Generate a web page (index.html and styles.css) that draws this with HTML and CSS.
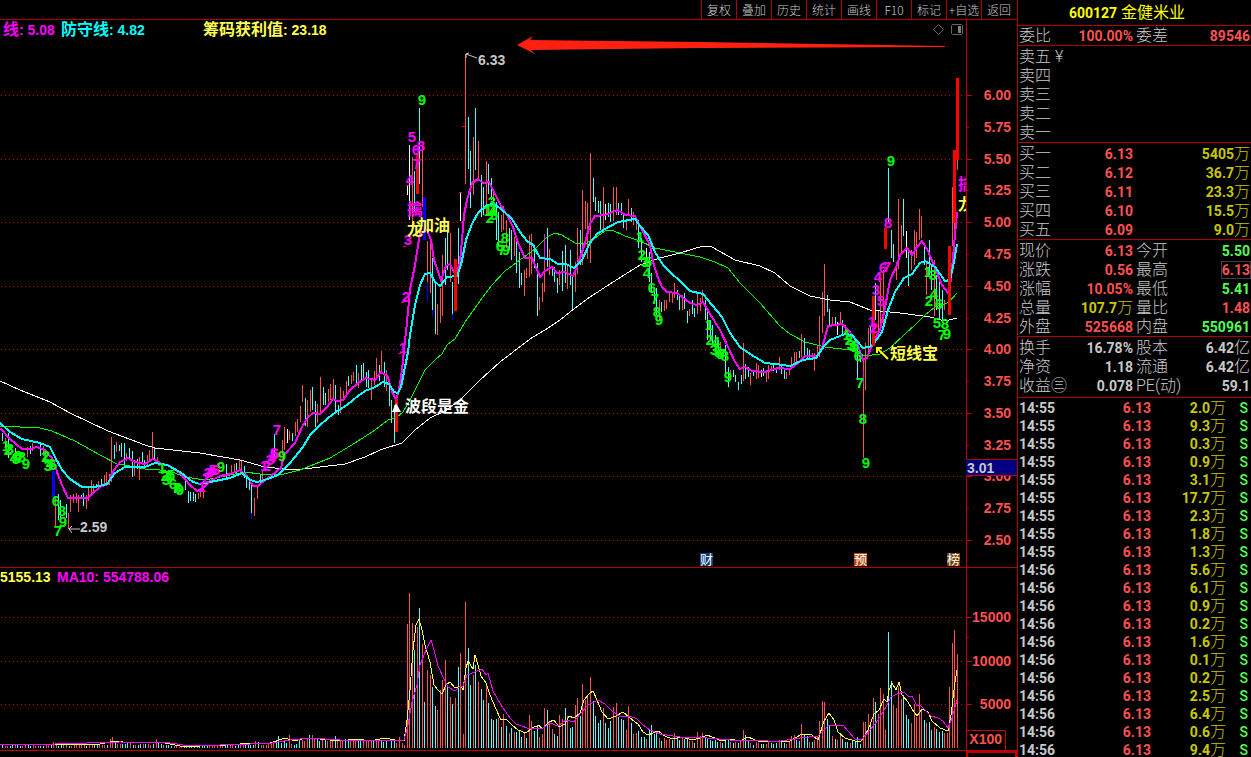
FILE: index.html
```html
<!DOCTYPE html>
<html lang="zh-CN">
<head>
<meta charset="utf-8">
<title>600127 金健米业</title>
<link rel="stylesheet" href="styles.css">
</head>
<body>
<main class="terminal">
  <section class="charts">
    <nav class="toolbar">
      <button>复权</button><button>叠加</button><button>历史</button><button>统计</button><button>画线</button><button>F10</button><button>标记</button><button>+自选</button><button>返回</button>
    </nav>
    <svg class="pane price" viewBox="0 20 1017 547" preserveAspectRatio="xMaxYMin meet">
      <defs><clipPath id="plot"><rect x="0" y="20" width="966" height="547"/></clipPath></defs>
      <g class="grid" id="price-grid"></g>
      <g clip-path="url(#plot)">
        <g id="candles"></g>
        <polyline class="ma white" points="0,381 20,390 50,402 70,413 108,431 145,445 155,448 200,453 240,460 265,467 295,470 320,467 345,464 365,457 380,450 402,443 415,430 430,418 445,411 460,400 480,380 500,362 530,339 545,330 560,320 570,312 590,297 610,284 640,265 660,258 680,253 703,246 712,247 735,260 760,266 775,273 790,286 810,296 830,300 850,302 870,310 900,313 930,317 945,321 957,318"/>
        <polyline class="ma green" points="0,426 20,427 40,428 52,431 75,441 100,455 117,464 130,466 145,469 160,470 172,472 185,477 205,480 220,477 245,472 260,474 280,475 300,470 330,458 355,443 375,430 388,420 397,417 403,412 410,400 415,390 425,370 435,360 442,354 447,345 455,339 465,322 480,301 492,285 505,271 520,260 535,249 547,237 555,233 562,235 575,243 585,244 595,238 605,231 612,230 625,236 640,241 655,248 675,252 700,257 715,262 728,268 740,283 760,303 780,326 790,334 805,342 825,347 850,350 865,356 880,354 890,348 905,334 915,325 925,315 935,307 945,304 950,301 957,293"/>
        <polyline class="ma thick magenta" points="0,428 10,439 22,449 30,449 37,447 45,450 52,458 55,465 58,475 62,485 68,498 88,498 92,494 100,487 108,484 112,473 120,462 128,458 135,462 145,464 153,459 162,464 168,465 180,473 190,485 197,491 203,488 210,481 220,476 230,474 240,470 247,476 253,486 258,486 265,480 272,475 281,468 284,455 295,443 302,427 308,417 313,413 320,414 327,407 333,399 337,401 343,400 350,390 358,383 366,378 375,380 381,372 388,377 391,389 396,400 399,390 402,370 404,350 406,332 410,290 415,265 420,233 427,230 431,240 434,260 441,280 446,266 450,264 453,270 456,276 460,262 462,240 464,215 467,200 472,183 478,179 483,183 489,182 493,190 500,204 508,217 513,227 518,243 525,258 532,258 535,265 540,277 545,271 552,267 557,273 565,272 573,276 578,264 585,243 590,224 595,216 605,215 610,213 618,210 625,215 635,216 640,226 650,245 653,262 658,278 662,287 667,292 677,293 682,297 690,303 697,305 703,302 710,314 720,330 728,347 735,362 740,369 745,367 752,371 765,372 778,368 790,369 798,363 805,356 817,356 822,348 828,326 842,324 850,332 857,343 863,360 867,358 873,343 880,330 885,308 890,280 897,265 900,255 907,248 912,255 917,247 922,241 928,251 935,268 942,285 948,293 951,280 955,235 957,212"/>
        <polyline class="ma thick cyan" points="0,423 10,432 22,439 40,443 50,447 55,457 62,470 70,479 82,487 95,487 107,484 115,473 125,467 145,467 155,463 167,465 180,472 193,482 200,484 215,481 230,478 242,473 250,480 257,482 265,480 278,475 290,463 303,447 310,435 318,427 328,418 336,412 347,405 358,396 365,391 375,387 383,382 389,384 394,392 398,393 401,387 404,372 408,352 410,335 415,305 420,285 425,274 430,273 435,282 440,286 447,277 457,276 461,265 466,240 472,224 478,213 487,205 493,204 500,208 512,219 520,232 527,241 533,245 540,258 550,259 558,264 566,264 574,268 582,260 590,243 597,234 605,229 618,222 635,219 640,226 648,235 655,252 663,265 670,272 680,281 690,291 703,294 712,305 722,317 730,333 740,347 750,354 765,363 775,364 790,366 803,360 816,358 824,346 830,340 845,334 852,335 863,348 872,346 882,332 888,310 895,292 904,278 912,274 920,263 925,261 935,267 945,281 950,280 954,262 957,244"/>
        <g id="blocks"></g>
        <path class="fill-white" d="M396 403l5 9h-9z"/>
        <g class="count" id="counts"></g>
        <g class="note">
          <text class="t-magenta" x="407" y="215">擒</text>
          <text class="t-yellow" x="407" y="235">龙</text>
          <text class="t-yellow" x="418" y="231">加油</text>
          <text class="t-white" x="405" y="412">波段是金</text>
          <text class="t-yellow" x="890" y="359">短线宝</text>
          <text class="t-magenta" x="958" y="190">擒</text>
          <text class="t-yellow" x="958" y="210">龙</text>
        </g>
        <path class="pointer yellow" d="M888 359l-11-11m0 5v-5h5"/>
        <path class="pointer gray" d="M80 529h-11m3-3l-3 3 3 4M477 58l-11-4m0 4v-4l3-1"/>
        <text class="price-tag" x="80" y="532">2.59</text>
        <text class="price-tag" x="478" y="65">6.33</text>
        <path class="arrow" d="M517 45L533 36L530 40L700 42L945 46V47L700 48L531 50L535 54Z"/>
      </g>
      <g class="legend">
        <text class="t-magenta" x="3" y="35"><tspan class="cjk">线</tspan>: 5.08</text>
        <text class="t-cyan" x="61" y="35"><tspan class="cjk">防守线</tspan>: 4.82</text>
        <text class="t-yellow" x="203" y="35"><tspan class="cjk">筹码获利值</tspan>: 23.18</text>
      </g>
      <path class="tool-icon" d="M938.500 24.500l5 5-5 5-5-5zM952.500 24.500h9l1 1v8l-1 1h-9l-1-1v-8z"/>
      <path class="tool-fill" d="M958 26h3v7h-3z"/>
      <g class="event">
        <rect x="700" y="553" width="13" height="13" fill="#0c3c74"/><text x="700" y="564">财</text>
        <rect x="854" y="553" width="13" height="13" fill="#b84810"/><text x="854" y="564">预</text>
        <rect x="947" y="553" width="13" height="13" fill="#704008"/><text x="947" y="564">榜</text>
      </g>
      <path class="frame" id="price-axis" d="M966.500 20V567"/>
      <g class="scale" id="price-scale"></g>
      <rect class="cursor" x="966" y="459" width="52" height="17"/>
      <path class="frame" d="M967 459.500H1017M967 475.500H1017"/>
      <text class="price-tag" x="967" y="473">3.01</text>
    </svg>
    <svg class="pane volume" viewBox="0 568 1017 189" preserveAspectRatio="xMaxYMin meet">
      <g class="grid" id="volume-grid"></g>
      <g id="bars"></g>
      <polyline class="ma yellow" points="0,744 100,744 115,741 130,743 152,742 165,743 180,746 200,746 225,745 240,744 255,743 270,743 285,738 295,741 305,738 320,739 340,741 357,739 370,741 385,738 395,740 404,741 407,720 410,690 413,650 416,625 419,619 422,630 425,645 430,662 434,685 438,690 442,694 446,685 450,682 455,688 461,686 463,690 466,668 468,661 473,669 475,655 478,665 481,676 486,683 490,695 496,709 501,720 506,719 512,725 518,730 526,733 532,728 539,725 542,729 549,722 554,720 559,727 565,724 569,716 574,718 580,713 584,700 590,693 593,691 597,700 602,712 608,719 616,716 623,712 630,718 638,724 643,732 648,735 658,731 665,736 672,739 682,737 692,740 700,738 707,735 722,741 730,739 740,741 748,737 760,742 790,741 802,734 812,735 818,740 824,721 829,713 834,720 838,732 845,738 855,741 861,741 868,730 874,714 879,710 884,699 887,702 889,690 892,683 896,690 899,682 902,695 908,702 912,709 917,716 922,709 928,712 932,721 940,728 948,731 951,715 955,682 957,670"/>
      <polyline class="ma magenta" points="0,744 25,744 40,745 55,744 120,742 170,743 190,746 250,744 272,743 290,740 310,738 340,740 360,740 404,740 408,725 412,702 417,685 420,665 426,650 431,640 434,650 438,666 444,679 448,687 455,691 460,686 463,686 467,675 475,672 482,669 486,675 488,673 493,691 501,705 510,718 516,724 530,729 543,728 550,723 558,726 566,720 574,722 580,714 588,705 598,700 605,704 612,711 619,716 630,716 637,719 643,725 650,730 660,734 680,737 707,738 730,740 740,741 760,740 775,742 800,738 818,736 828,726 843,725 848,731 855,739 862,739 870,730 878,720 886,707 891,697 897,694 904,692 909,697 912,696 917,706 920,705 931,716 938,718 943,721 948,728 952,718 957,700"/>
      <g class="legend">
        <text class="t-yellow" x="0" y="582">5155.13</text>
        <text class="t-magenta" x="57" y="582">MA10: 554788.06</text>
      </g>
      <path class="frame" id="volume-axis" d="M966.500 568V757M0 750.500H1017M967 730.500H1005.500V750M967 637.500h2M967 683.500h2"/>
      <path class="frame heavy" d="M967 757V752H1016V757"/>
      <g class="scale" id="volume-scale"><text x="1002" y="744">X100</text></g>
    </svg>
  </section>

  <aside class="quote">
    <h1 class="title"><b>600127</b> 金健米业</h1>
    <table class="block">
      <colgroup><col class="c-label"><col class="c-value"><col class="c-label"><col></colgroup>
      <tr><th>委比</th><td class="up">100.00%</td><th>委差</th><td class="up">89546</td></tr>
    </table>
    <table class="block">
      <tr><th>卖五 ¥</th></tr><tr><th>卖四</th></tr><tr><th>卖三</th></tr><tr><th>卖二</th></tr><tr><th>卖一</th></tr>
    </table>
    <table class="block">
      <colgroup><col class="c-label"><col class="c-value"><col></colgroup>
      <tr><th>买一</th><td class="up">6.13</td><td class="vol">5405<i>万</i></td></tr>
      <tr><th>买二</th><td class="up">6.12</td><td class="vol">36.7<i>万</i></td></tr>
      <tr><th>买三</th><td class="up">6.11</td><td class="vol">23.3<i>万</i></td></tr>
      <tr><th>买四</th><td class="up">6.10</td><td class="vol">15.5<i>万</i></td></tr>
      <tr><th>买五</th><td class="up">6.09</td><td class="vol">9.0<i>万</i></td></tr>
    </table>
    <table class="block">
      <colgroup><col class="c-label"><col class="c-value"><col class="c-label"><col></colgroup>
      <tr><th>现价</th><td class="up">6.13</td><th>今开</th><td class="down">5.50</td></tr>
      <tr><th>涨跌</th><td class="up">0.56</td><th>最高</th><td class="up"><span class="boxed">6.13</span></td></tr>
      <tr><th>涨幅</th><td class="up">10.05%</td><th>最低</th><td class="down">5.41</td></tr>
      <tr><th>总量</th><td class="vol">107.7<i>万</i></td><th>量比</th><td class="up">1.48</td></tr>
      <tr><th>外盘</th><td class="up">525668</td><th>内盘</th><td class="down">550961</td></tr>
    </table>
    <table class="block finance">
      <colgroup><col class="c-label"><col class="c-value"><col class="c-label"><col></colgroup>
      <tr><th>换手</th><td>16.78%</td><th>股本</th><td>6.42<i>亿</i></td></tr>
      <tr><th>净资</th><td>1.18</td><th>流通</th><td>6.42<i>亿</i></td></tr>
      <tr><th>收益㊂</th><td>0.078</td><th>PE(动)</th><td>59.1</td></tr>
    </table>
    <table class="block ticks">
      <colgroup><col class="c-label"><col class="c-price"><col class="c-amount"><col></colgroup>
      <tbody id="ticks"></tbody>
    </table>
  </aside>
</main>
<script src="chart.js"></script>
</body>
</html>
```
FILE: styles.css
```css
* { box-sizing: border-box; }
body {
  margin: 0;
  background: #000;
  color: #c8c8c8;
  font-family: Roboto, "Noto Sans CJK SC", sans-serif;
  overflow: hidden;
}
.terminal {
  display: grid;
  grid-template-columns: 1fr 234px;
  height: 100vh;
}
.charts { display: flex; flex-direction: column; min-width: 0; }
.toolbar {
  display: flex;
  justify-content: flex-end;
  height: 20px;
  flex: none;
  padding-right: 1px;
  border-bottom: 1px solid #b00000;
}
.toolbar button {
  width: 35px;
  padding: 0;
  border: 0;
  border-left: 1px solid #b00000;
  background: none;
  color: #c8c8c8;
  font: 300 12px/17px "Noto Sans CJK SC", sans-serif;
  white-space: nowrap;
}
.pane { display: block; width: 100%; min-height: 0; }
.price { flex: 547; }
.volume { flex: 189; border-top: 1px solid #b00000; }
.pane text { font: 700 14px "Liberation Sans", "Noto Sans CJK SC", sans-serif; }

.grid path { stroke: #b00000; stroke-dasharray: 1 3; shape-rendering: crispEdges; }
.bar { fill: none; shape-rendering: crispEdges; }
.ma { fill: none; stroke-width: 1; shape-rendering: crispEdges; }
.thick { stroke-width: 2; }
.white { stroke: #fff; }
.green { stroke: #0f0; }
.magenta { stroke: #f0f; }
.cyan { stroke: #0ff; }
.yellow { stroke: #ffff50; }
.red { stroke: #ff5050; }
.aqua { stroke: #50ffff; }
.blue { stroke: #00f; }
.gray { stroke: #c8c8c8; }
.pointer { fill: none; }
.pointer.yellow { stroke-width: 2; stroke: #ff0; }
.fill-white { fill: #fff; }
.t-magenta { fill: #f0f; }
.t-cyan { fill: #0ff; }
.t-yellow { fill: #ffff50; }
.t-white { fill: #fff; }
.t-green { fill: #0f0; }
.pane .count text { font-size: 15px; text-anchor: middle; }
.pane .note text, .pane .legend .cjk { font-family: "Noto Sans CJK SC", sans-serif; font-size: 16px; }
.price-tag { fill: #c8c8c8; }
.arrow { fill: #ff2010; }
.tool-icon { fill: none; stroke: #666; }
.tool-fill { fill: #808080; }
.pane .event text { font: 400 13px "Noto Sans CJK SC", sans-serif; fill: #fff; }
.frame { fill: none; stroke: #c00000; shape-rendering: crispEdges; }
.heavy { stroke-width: 2; }
.scale { fill: #ff5050; text-anchor: end; }
.cursor { fill: #000080; }

.quote { border-left: 1px solid #b00000; overflow: hidden; }
.title {
  margin: 0;
  height: 25px;
  font-size: 16px;
  font-weight: 400;
  line-height: 25px;
  text-align: center;
  padding-right: 15px;
  color: #ff0;
}
.title b { font-size: 14px; }
.block {
  width: 100%;
  table-layout: fixed;
  border-collapse: separate;
  border-spacing: 0;
  border-top: 1px solid #b00000;
  padding: 1px 0 0 1px;
}
.title + .block { padding-top: 0; }
.block.finance { padding-bottom: 2px; }
.block td, .block th { height: 19px; padding: 0; line-height: 18px; white-space: nowrap; }
.block th { font-size: 16px; font-weight: 300; text-align: left; }
.block td + th { padding-left: 3px; }
.block td { font-size: 14px; font-weight: 700; text-align: right; }
.block i { font-size: 16px; line-height: 14px; font-style: normal; font-weight: 300; }
.block td:last-child { padding-right: 1px; }
.c-label { width: 48px; }
.c-value { width: 66px; }
.c-price { width: 84px; }
.c-amount { width: 75px; }
.block .up { color: #ff5050; }
.block .down { color: #50ff50; }
.block .vol { color: #c8c800; }
.boxed { display: inline-block; line-height: 16px; outline: 1px solid #404040; }
.block.ticks td { height: 18px; line-height: 18px; }
.ticks td:first-child { text-align: left; }
.ticks td:last-child { padding-right: 3px; font-weight: 500; }
```
FILE: chart.js
```js
const SVG = "http://www.w3.org/2000/svg";
const byId = (id) => document.getElementById(id);

function add(parent, tag, attrs, text) {
  const el = document.createElementNS(SVG, tag);
  for (const key in attrs) el.setAttribute(key, attrs[key]);
  if (text) el.textContent = text;
  byId(parent).appendChild(el);
}

const STROKE = { r: "red", c: "aqua", w: "white", b: "blue", m: "magenta" };

// Colour, x, high, low
const candles = `
c2,433,441 r5,438,448 c8,433,458 c15,448,460 r27,447,457 c30,446,454 r32,443,451 c40,443,456 r43,446,456
r55,497,526 c58,494,520 c60,500,520 c66,504,518 r68,513,529 r70,495,512 r73,494,503 r76,493,503 r78,495,512 c81,495,499
c83,493,506 r86,495,509 r88,488,501 r91,480,494 r93,484,492 c96,484,488 r98,481,488 c101,479,487 r104,475,486
r106,472,486 r109,474,485 r111,437,482 c114,445,459 r116,442,452 c119,445,451 c121,443,457 c124,443,465 r126,453,461
c129,448,458 c132,451,477 r134,460,476 c137,459,469 r139,457,480 c142,452,463 c144,460,467 r147,455,465 r149,450,462
r152,432,458 c154,448,461 r157,457,463 c185,481,490 c188,491,503 c190,492,501 c193,492,501 c195,494,502 r198,493,499
r200,488,497 r203,486,498 c226,464,478 r231,465,474 r234,464,473 c236,463,474 r239,460,470 r241,460,472 c244,466,478
c246,474,488 c249,480,490 c251,483,513 b251,513,519 r254,498,516 r257,485,499 c260,474,484 r262,470,480
c274,434,457 r282,440,455 r284,427,450 w287,429,443 r289,431,440 c292,433,441 r295,422,436 r297,419,432 r300,406,422
r302,385,402 c305,398,426 r307,400,427 r310,390,412 c312,387,410 c315,401,427 r317,404,423 r320,377,415 c323,387,405
c325,393,405 r328,389,402 r330,384,400 r333,379,398 c335,385,411 c338,405,415 r340,387,413 r343,391,400 r346,381,393
c348,376,386 r351,375,384 r353,372,381 c356,365,383 r358,373,388 c361,365,382 c363,363,378 c366,372,387 c368,370,388
r371,378,400 r374,371,385 r376,358,376 c379,365,381 r381,351,371 c384,362,387 r386,370,391 c389,379,406 c391,400,423
c394,405,443 w407,185,195 w409,145,220 r412,157,228 c414,171,212 c419,108,184 r422,145,207 r427,241,282 b427,282,301
r430,240,293 c432,258,310 b432,310,316 c435,284,334 r437,304,335 r440,288,323 r442,255,316 c445,238,285 c447,231,270
r450,233,282 c452,282,314 b452,314,320 c458,228,284 w460,192,221 r465,54,184 c468,117,169 c470,151,208 r473,137,195
c475,108,170 r478,141,180 c481,175,217 c483,187,215 r486,161,215 c488,164,194 c491,178,200 r493,190,215 c496,202,240
c498,212,245 r501,215,232 r503,206,230 r506,220,248 c509,228,250 c511,230,260 r514,237,256 c516,240,273 c519,252,288
c521,273,285 r524,270,296 r526,268,278 r529,235,277 r531,234,274 c534,245,268 c537,263,316 r539,297,310 r542,283,302
m544,234,262 r544,262,292 c547,228,267 r549,249,275 c552,267,276 c554,267,282 c557,278,293 r559,270,285 c562,251,291
c565,245,283 r567,266,289 c570,250,285 c572,275,310 r575,262,292 r577,228,274 c580,230,265 r582,190,265 r585,201,229
r587,203,259 r590,153,263 c593,178,202 c595,197,211 c598,201,213 c600,201,230 r603,187,230 w605,204,220 c608,203,217
c610,204,222 r613,187,221 r616,187,215 c618,203,215 c621,203,215 c623,213,228 r626,220,230 r628,199,215 c631,208,222
r633,212,225 r636,219,230 c638,220,248 c641,238,262 w646,248,260 c649,252,282 c651,273,292 c654,290,303 c656,288,315
r659,300,320 c661,302,312 r664,300,311 r666,300,309 r669,293,302 r672,292,303 r674,283,298 c677,290,300 c679,295,310
r682,295,310 c684,293,309 c687,311,323 r689,309,316 c692,300,314 c694,308,317 r697,292,314 r700,298,311 r702,290,301
c705,300,320 c707,310,340 c710,320,340 c712,325,345 c715,335,350 c718,340,355 r720,342,350 c725,345,373 c728,367,387
r730,370,380 c733,370,377 c735,375,382 c738,382,390 c741,375,384 r743,343,381 c745,364,379 c748,367,377 r750,373,385
c753,370,376 r756,363,379 r758,365,378 w761,370,377 c763,368,376 r766,372,382 r768,365,379 r771,366,371 c773,365,371
c776,368,373 r779,357,370 c781,366,374 c784,369,379 r786,372,379 r789,368,375 r791,357,369 r794,352,367 r796,352,362
c799,351,358 r801,334,357 c804,338,355 c807,348,358 c809,350,358 r812,353,358 r814,353,371 r817,346,357 r819,316,357
r822,292,333 r824,264,316 c827,295,312 c829,309,325 r832,317,325 c835,317,326 w837,322,335 r840,312,323 c842,320,334
r845,325,335 c857,350,380 c860,350,362 r863,360,458 m863,370,384 r865,343,390 r868,328,354 c870,327,346 c875,283,320
r878,310,335 r880,280,330 r883,270,330 c888,168,222 c891,230,258 c893,244,262 r896,262,280 r898,199,269 r901,225,252
c903,199,236 w906,231,258 c908,250,286 r911,250,270 r914,230,265 r916,232,258 r919,209,240 r921,216,238 c924,245,265
r926,262,295 c929,240,275 c931,265,290 r934,260,316 c936,275,310 c939,280,320 c942,290,320 r944,300,310 r952,187,246
r954,222,258 r957,160,170`;

for (const item of candles.trim().split(/\s+/)) {
  const [x, high, low] = item.slice(1).split(",").map(Number);
  add("candles", "path", { class: "bar " + STROKE[item[0]], d: `M${x + 0.5} ${high}V${low}` });
}

// Signal candles: x, y, width, height, colour
for (const [x, y, w, h, fill] of [
  [52, 471, 3, 26, "#00f"], [395, 399, 3, 33, "#f00"], [416, 153, 3, 41, "#f00"],
  [423, 197, 3, 43, "#00f"], [454, 259, 3, 52, "#f00"], [872, 296, 3, 50, "#f00"],
  [884, 228, 3, 21, "#f00"], [948, 246, 3, 69, "#f00"], [953, 150, 3, 73, "#f00"],
  [956, 78, 3, 82, "#f00"], [398, 353, 3, 1, "#f00"], [401, 302, 3, 1, "#f00"],
  [403, 246, 3, 1, "#f00"], [406, 185, 3, 1, "#f00"], [459, 192, 3, 1, "#f00"],
  [462, 126, 3, 1, "#f00"], [860, 414, 3, 1, "#00f"],
]) add("blocks", "rect", { x, y, width: w, height: h, fill });

// Sequence counts: digit, centre x, centre y
const counts = {
  "t-green": `1,6,446 2,8,450 3,10,449 4,14,458 5,16,459 6,18,456 7,20,458 8,22,457 9,26,464 1,45,457 2,46,456 3,48,466
    4,50,464 5,53,465 6,56,501 8,62,511 9,63,522 7,58,531 1,162,468 2,165,476 3,166,480 4,169,477 5,171,475 6,173,484
    7,176,488 8,178,488 9,180,490 9,221,467 9,282,456 9,422,100 1,488,211 2,490,218 3,492,202 4,493,211 5,494,215
    6,500,246 8,505,238 7,502,250 9,506,250 1,640,237 2,642,255 3,645,262 4,647,273 5,648,262 6,652,288 7,655,299
    8,657,312 9,659,320 1,709,325 2,710,340 3,714,350 4,716,342 5,718,352 6,720,354 7,722,354 8,725,356 9,728,377
    1,847,335 2,849,340 3,851,345 4,853,347 5,855,346 6,858,356 7,860,383 8,863,419 9,866,463 9,891,161 1,928,272
    2,929,301 3,933,275 4,934,294 5,937,323 6,939,304 7,942,335 8,945,324 9,947,334`,
  "t-magenta": `1,202,487 2,206,478 3,208,473 4,210,472 5,213,470 6,216,470 1,264,466 2,267,466 3,270,460 4,272,458
    5,275,454 6,274,453 7,277,430 1,403,348 2,406,297 3,408,240 4,410,180 5,412,137 6,416,150 8,421,146 7,417,164
    1,872,322 2,874,328 3,876,290 4,878,277 5,881,301 6,883,268 7,887,267 8,888,223`,
};
for (const cls in counts) {
  for (const item of counts[cls].trim().split(/\s+/)) {
    const [digit, x, y] = item.split(",");
    add("counts", "text", { class: cls, x, y: Number(y) + 5 }, digit);
  }
}

// Volume: colour, x, top
const BASE = 748;
let volume = `
c391,741 c394,741 r396,743 r399,737 r402,743 r404,745 r407,624 r409,593 r412,623 c414,650 r417,627 c419,608 r422,644
c424,702 r427,670 r430,675 c432,687 c435,706 r437,710 r440,690 r442,680 r445,660 c447,687 r450,697 c452,704 r455,698
c458,667 r460,653 r463,734 r465,602 c468,648 c470,685 r473,675 c475,665 r478,682 c481,689 c483,700 r486,684 c488,703
c491,719 c493,720 c496,719 r498,718 c501,727 r503,714 c506,726 r509,733 c511,728 r514,732 c516,732 c519,731 c521,737
r524,732 c526,738 r529,715 r531,721 c534,731 c537,725 r539,737 r542,734 r544,708 c547,710 r549,722 r552,729 c554,734
c557,736 r559,715 r562,719 c565,708 r567,716 c570,728 c572,727 r575,705 r577,698 c580,716 r582,684 r585,700 r587,697
r590,677 c593,701 c595,716 c598,723 c600,720 r603,708 c605,723 c608,728 c610,721 r613,707 r616,703 c618,717 c621,719
c623,720 r626,730 r628,706 c631,723 r633,734 r636,733 c638,731 c641,737 c644,737 r646,739 c649,729 c651,725 c654,734
c656,733 r659,738 c661,741 r664,738 r666,740 r669,739 c672,740 r674,733 c677,738 c679,740 r682,738 c684,739 c687,738
r689,741 r692,741 c694,743 r697,732 r700,736 r702,733 c705,737 c707,738 c710,740 c712,741 c715,740 c717,742 r720,742
c722,743 c725,741 c728,740 r730,742 c733,743 r735,742 c738,743 r740,741 r743,730 c745,735 c748,741 r750,743 c753,745
r756,742 r758,743 c761,744 c763,744 r766,744 r768,741 c771,743 c773,744 c776,743 r779,740 c781,741 c784,743 r786,744
r789,741 r791,736 r794,735 c796,740 c799,741 r801,724 c804,735 c807,736 r809,742 c812,742 r814,740 r817,736 r819,721
r822,701 r824,702 c827,719 c829,725 r832,736 c835,739 r837,740 r840,733 c842,739 c845,742 c847,742 r850,743 c852,741
c855,741 c857,737 c860,744 r863,722 r865,722 r868,714 c870,725 r873,698 c875,702 r878,714 r880,688 r883,694 r885,730
c888,632 c891,681 r893,705 r896,708 r898,687 r901,699 c903,695 c906,715 c908,719 r911,723 r914,704 r916,717 r919,694
r921,711 c924,720 r926,723 c929,722 c931,730 r934,727 c936,729 c939,732 c942,731 r944,733 r947,733 r949,687 r952,643
r954,630 r957,654`.trim().split(/\s+/);

// Quiet early sessions: one colour letter and one height per bar, evenly spaced
const quietColours = "crrccrccrrccrrrccrrcrrccrrcrrrrrrcrrccrrrcrrcrrcccrcrccrcrrcrccrcccrrrrcccccrccccrrrrrrccrrccrrccccrcrrrrrrcccccrrcccrrrcrrccrcrrrcrrrccrrrccrrrrcrrcccr";
const quietHeights = "3222333223323222233463233322333332333333339b6444455333444434964333222112112111222222333333323333333763334457c575d4348879ddaa798788c7779987778888877776787788";
for (let i = 0; i < 151; i++) {
  const height = parseInt(quietHeights[i] || "6", 16);
  volume.push(`${quietColours[i] || "r"}${Math.round(2 + i * 2.56)},${BASE - height}`);
}
for (const item of volume) {
  const [x, top] = item.slice(1).split(",").map(Number);
  add("bars", "path", { class: "bar " + STROKE[item[0]], d: `M${x + 0.5} ${BASE}V${top}` });
}

// Scales and grid lines
let priceTicks = "";
for (let i = 0; i <= 14; i++) {
  const y = 95 + Math.round((i * 445) / 14);
  add("price-scale", "text", { x: 1011, y: y + 5 }, (6 - i * 0.25).toFixed(2));
  priceTicks += `M967 ${y + 0.5}h${i % 2 ? 2 : 5}`;
  if (i % 2 === 0) add("price-grid", "path", { d: `M1 ${y + 0.5}H965` });
}
byId("price-axis").setAttribute("d", "M966.500 20V567" + priceTicks);
let volumeTicks = byId("volume-axis").getAttribute("d");
[15000, 10000, 5000].forEach((value, i) => {
  const y = [617, 661, 704][i];
  add("volume-scale", "text", { x: 1011, y: y + 5 }, String(value));
  add("volume-grid", "path", { d: `M1 ${y + 0.5}H965` });
  volumeTicks += `M967 ${y + 0.5}h5`;
});
byId("volume-axis").setAttribute("d", volumeTicks);

// Trade list
const amounts = "2.0 9.3 0.3 0.9 3.1 17.7 2.3 1.8 1.3 5.6 6.1 0.9 0.2 1.6 0.1 0.2 2.5 6.4 0.6 9.4".split(" ");
byId("ticks").innerHTML = amounts.map((amount, i) =>
  `<tr><td>${i < 9 ? "14:55" : "14:56"}</td><td class="up">6.13</td><td class="vol">${amount}<i>万</i></td><td class="down">S</td></tr>`
).join("");
```
